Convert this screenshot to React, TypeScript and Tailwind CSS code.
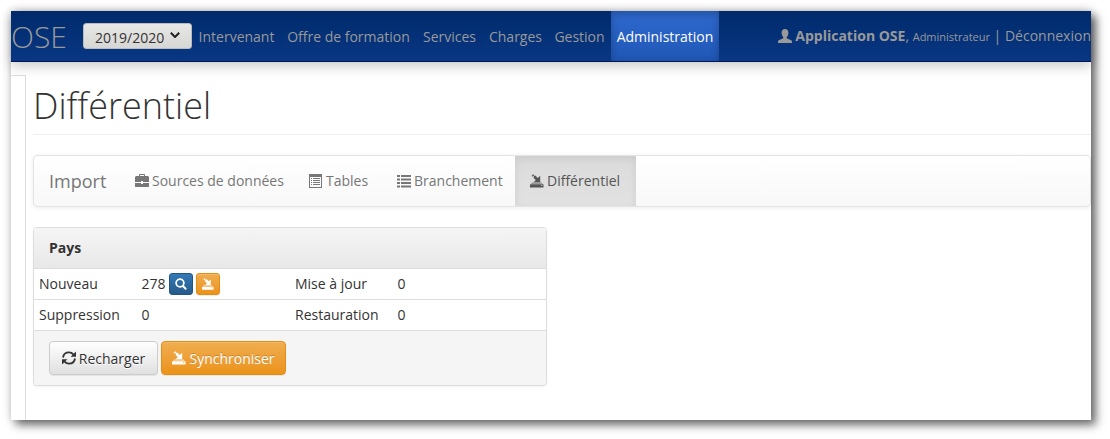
import type { ReactNode } from 'react';

type IconProps = { className?: string };

function Glyph({ className = 'size-3.5', children }: IconProps & { children: ReactNode }) {
  return (
    <svg viewBox="0 0 14 14" fill="currentColor" aria-hidden="true" className={`shrink-0 ${className}`}>
      {children}
    </svg>
  );
}

function UserIcon() {
  return (
    <Glyph>
      <path d="M7 0C4.8 0 3.6 1.5 3.6 3.6c0 1.7.5 3.300 1.500 4.300.4.5.3 1.200-.3 1.500L1.300 11C.4 11.400 0 11.900 0 12.800V14h14v-1.200c0-.9-.4-1.400-1.300-1.800L9.200 9.400c-.6-.3-.7-1-.3-1.500 1-1 1.500-2.600 1.500-4.300C10.400 1.500 9.200 0 7 0z" />
    </Glyph>
  );
}

function BriefcaseIcon() {
  return (
    <Glyph>
      <path
        fillRule="evenodd"
        d="M5 0h4c.6 0 1 .4 1 1v1h3l1 1v5H8V7H6v1H0V3l1-1h3V1c0-.6.400-1 1-1zm0 1v1h4V1H5zM0 9h6v1h2V9h6v3.500c0 .3-.2.500-.5.500H.5c-.3 0-.5-.2-.5-.5V9z"
      />
    </Glyph>
  );
}

function TableListIcon() {
  return (
    <Glyph>
      <path
        fillRule="evenodd"
        d="M0 0h13v14H0V0zm1 3v10h11V3H1zm1 1h1v1H2V4zm2 0h7v1H4V4zM2 6h1v1H2V6zm2 0h7v1H4V6zM2 8h1v1H2V8zm2 0h7v1H4V8zm-2 2h1v1H2v-1zm2 0h7v1H4v-1z"
      />
    </Glyph>
  );
}

function ListIcon() {
  return (
    <Glyph>
      <path d="M0 1h3v2H0zM4 1h10v2H4zM0 4.500h3v2H0zM4 4.500h10v2H4zM0 8h3v2H0zM4 8h10v2H4zM0 11.500h3v2H0zM4 11.500h10v2H4z" />
    </Glyph>
  );
}

function ImportIcon({ className }: IconProps) {
  return (
    <Glyph className={className}>
      <path d="M1.600 1.700 3.200.2l1 .9-1.500 1.700zM3.600 2.700l1.400-1.400 2.800 2.600L10.200 1.700V8.200H3.700l2.100-2.100-2-1.800z" />
      <path d="M2 8.600h9.600l1 1.100H1z" fillOpacity=".65" />
      <path fillRule="evenodd" d="M.4 10.200h12.800l.3.400v3H0v-3zM11 11.200v.9h1.300v-.9z" />
    </Glyph>
  );
}

function SearchIcon({ className }: IconProps) {
  return (
    <Glyph className={className}>
      <path
        fillRule="evenodd"
        d="M5.800.3a5.500 5.500 0 1 0 2.900 10.200l2.900 2.900c.4.400.9.400 1.300 0l.4-.4c.4-.4.4-.9 0-1.300l-2.900-2.900A5.500 5.500 0 0 0 5.800.3zm0 2a3.500 3.500 0 1 1 0 7 3.500 3.500 0 0 1 0-7z"
      />
    </Glyph>
  );
}

function RefreshIcon() {
  return (
    <Glyph>
      <g fill="none" stroke="currentColor" strokeWidth="1.800">
        <path d="M1 6.500C1.500 3.300 4 1.300 7 1.300c1.800 0 3.300.7 4.400 2" />
        <path d="M13 7.500c-.5 3.200-3 5.200-6 5.200-1.800 0-3.300-.7-4.400-2" />
      </g>
      <path d="M14 .4v5.400H8.600zM0 13.600V8.200h5.400z" />
    </Glyph>
  );
}

const navLinks = [
  { label: 'Intervenant', width: 'w-[89px]' },
  { label: 'Offre de formation', width: 'w-[135px]' },
  { label: 'Services', width: 'w-[67px]' },
  { label: 'Charges', width: 'w-[65px]' },
  { label: 'Gestion', width: 'w-[63px]' },
];

const importTabs = [
  { label: 'Sources de données', icon: <BriefcaseIcon />, width: 'w-[174px]' },
  { label: 'Tables', icon: <TableListIcon />, width: 'w-[88px]' },
  { label: 'Branchement', icon: <ListIcon />, width: 'w-[133px]' },
];

const orange =
  'border-[#e38d13] bg-gradient-to-b from-[#f0ad4e] to-[#eb9316] text-white shadow-[inset_0_1px_0_rgba(255,255,255,0.15),0_1px_1px_rgba(0,0,0,0.075)] [text-shadow:0_-1px_0_rgba(0,0,0,0.2)]';

const labelCell = 'h-[31px] border-b border-[#ddd] px-[5px] font-normal';
const valueCell = 'h-[31px] border-b border-[#ddd] px-[5px]';

function TopBar() {
  return (
    <header className="relative flex h-[51px] items-center border-b border-[#00184f] bg-gradient-to-b from-[#002a6b] to-[#0a3784] text-[#999] shadow-[0_4px_12px_rgba(0,0,0,0.22)]">
      <a href="#" className="h-[50px] w-[72px] text-[30px] leading-[52px] font-light">
        OSE
      </a>
      <div className="relative">
        <select
          aria-label="Année universitaire"
          className="block h-[26px] w-[109px] appearance-none rounded-[3px] border border-[#bbb] bg-gradient-to-b from-[#e8e8e6] to-[#d6d6d4] pt-1 pl-[11px] text-[14px] leading-5 text-[#333]"
        >
          <option>2019/2020</option>
        </select>
        <svg
          viewBox="0 0 10 6"
          aria-hidden="true"
          className="pointer-events-none absolute top-[9px] right-3 h-1.5 w-2.5 fill-none stroke-[#222] stroke-2"
        >
          <path d="M.8.8 5 5 9.200.8" />
        </svg>
      </div>
      <nav className="flex leading-[52px]">
        {navLinks.map((link) => (
          <a key={link.label} href="#" className={`${link.width} h-[50px] text-center whitespace-nowrap`}>
            {link.label}
          </a>
        ))}
        <a
          href="#"
          aria-current="page"
          className="h-[50px] w-[108px] bg-gradient-to-b from-[#2f6ad0] to-[#1f57b5] text-center text-white shadow-[inset_0_3px_9px_rgba(0,0,0,0.25)]"
        >
          Administration
        </a>
      </nav>
      <div className="ml-auto flex h-[50px] items-center gap-[3px] leading-[52px] whitespace-nowrap">
        <UserIcon />
        <span>
          <b>Application OSE</b>, <small className="text-[11px]">Administrateur</small> |{' '}
          <a href="#">Déconnexion</a>
        </span>
      </div>
    </header>
  );
}

function ImportNav() {
  return (
    <nav className="mt-5 flex rounded border border-[#e4e4e4] bg-gradient-to-b from-white to-[#f8f8f8] leading-[50px] text-[#777] shadow-[0_1px_5px_rgba(0,0,0,0.075)]">
      <a href="#" className="w-[86px] pl-[15px] text-[18px]">
        Import
      </a>
      {importTabs.map((tab) => (
        <a key={tab.label} href="#" className={`${tab.width} flex items-center gap-[3px] pl-[15px] whitespace-nowrap`}>
          {tab.icon}
          {tab.label}
        </a>
      ))}
      <a
        href="#"
        aria-current="page"
        className="flex w-[121px] items-center gap-[3px] bg-gradient-to-b from-[#dbdbdb] to-[#e2e2e2] pl-[15px] text-[#555] shadow-[inset_0_3px_9px_rgba(0,0,0,0.075)]"
      >
        <ImportIcon />
        Différentiel
      </a>
    </nav>
  );
}

function CountryPanel() {
  return (
    <section className="mt-5 rounded border border-[#ddd] bg-white shadow-[0_1px_2px_rgba(0,0,0,0.05)]">
      <h2 className="rounded-t-[3px] border-b border-[#ddd] bg-gradient-to-b from-[#f5f5f5] to-[#e8e8e8] px-[15px] py-2.5 leading-5 font-bold">
        Pays
      </h2>
      <table className="w-full table-fixed border-separate border-spacing-0 text-left leading-5">
        <colgroup>
          <col className="w-[20%]" />
          <col className="w-[30%]" />
          <col className="w-[20%]" />
          <col className="w-[30%]" />
        </colgroup>
        <tbody>
          <tr>
            <th className={labelCell}>Nouveau</th>
            <td className={valueCell}>
              <div className="flex items-center gap-[3px]">
                <span className="w-[25px]">278</span>
                <button
                  type="button"
                  aria-label="Voir"
                  className="flex h-[22px] w-6 items-center justify-center rounded-[3px] border border-[#245580] bg-gradient-to-b from-[#337ab7] to-[#265a88] text-white"
                >
                  <SearchIcon className="size-3" />
                </button>
                <button
                  type="button"
                  aria-label="Synchroniser les nouveaux"
                  className={`flex h-[22px] w-6 items-center justify-center rounded-[3px] border ${orange}`}
                >
                  <ImportIcon className="size-3" />
                </button>
              </div>
            </td>
            <th className={labelCell}>Mise à jour</th>
            <td className={valueCell}>0</td>
          </tr>
          <tr>
            <th className={labelCell}>Suppression</th>
            <td className={valueCell}>0</td>
            <th className={labelCell}>Restauration</th>
            <td className={valueCell}>0</td>
          </tr>
        </tbody>
      </table>
      <footer className="flex gap-[3px] rounded-b-[3px] bg-[#f5f5f5] px-[15px] py-2.5">
        <button
          type="button"
          className="flex h-[34px] w-[109px] items-center justify-center gap-[3px] rounded border border-[#ccc] bg-gradient-to-b from-white to-[#e0e0e0] shadow-[0_1px_1px_rgba(0,0,0,0.075)] [text-shadow:0_1px_0_#fff]"
        >
          <RefreshIcon />
          Recharger
        </button>
        <button
          type="button"
          className={`flex h-[34px] w-[125px] items-center justify-center gap-[3px] rounded border ${orange}`}
        >
          <ImportIcon />
          Synchroniser
        </button>
      </footer>
    </section>
  );
}

export default function App() {
  return (
    <div className="bg-white pt-[11px] pr-[19px] pb-[19px] pl-[11px] font-['Open_Sans','Noto_Sans',sans-serif] text-[14px] text-[#333]">
      <div className="bg-white shadow-[5px_5px_9px_rgba(0,0,0,0.55),0_0_9px_rgba(0,0,0,0.2)]">
        <TopBar />
        <div className="flex">
          <aside className="mt-[13px] w-[15px] border-t border-r border-[#ddd]" />
          <main className="min-w-0 flex-1 pb-[34px] pl-[7px]">
            <h1 className="mt-6 border-b border-[#eee] pb-2 text-[36px] leading-10 font-light">
              Différentiel
            </h1>
            <ImportNav />
            <div className="grid grid-cols-2 gap-[30px]">
              <CountryPanel />
            </div>
          </main>
        </div>
      </div>
    </div>
  );
}
